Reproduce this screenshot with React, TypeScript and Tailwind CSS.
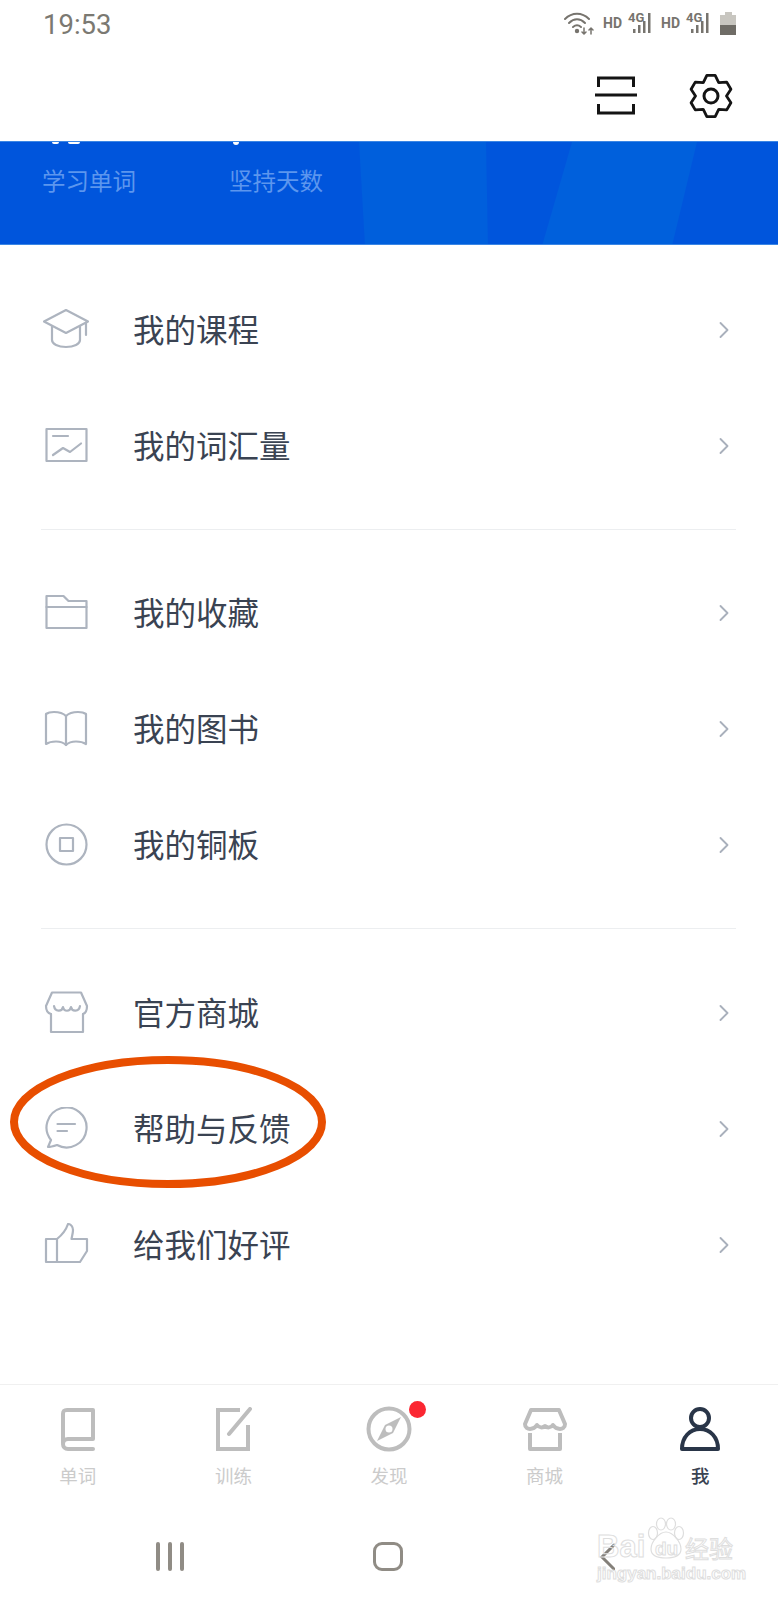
import { ChevronRight } from "lucide-react";
import type { ReactNode } from "react";

const cjk = "font-['Noto_Sans_CJK_SC','Noto_Sans',sans-serif]";

function gearPath(cx: number, cy: number, outer: number, inner: number) {
  const pts: string[] = [];
  for (let i = 0; i < 6; i++) {
    const a = (i * Math.PI) / 3 - Math.PI / 2;
    const at = (r: number, d: number) =>
      `${(cx + r * Math.cos(a + d)).toFixed(2)} ${(cy + r * Math.sin(a + d)).toFixed(2)}`;
    pts.push(at(inner, -0.52), at(outer, -0.2), at(outer, 0.2), at(inner, 0.52));
  }
  return "M" + pts.join("L") + "Z";
}

function MenuIcon({ children }: { children: ReactNode }) {
  return (
    <svg
      width="46"
      height="46"
      viewBox="0 0 46 46"
      fill="none"
      stroke="#adb4bf"
      strokeWidth="2.200"
      strokeLinejoin="round"
      strokeLinecap="round"
      className="shrink-0"
    >
      {children}
    </svg>
  );
}

const icons = {
  cap: (
    <>
      <path d="M23 2 45 13.500 23 25 1 13.500Z" />
      <path d="M9 18v14c0 4 6 7 14 7s14-3 14-7V18" />
      <path d="M43 14.500V27" />
    </>
  ),
  chart: (
    <>
      <rect x="3.500" y="5" width="40" height="32" />
      <path d="M10 12h15" />
      <path d="M10 31l10-7 7 4 11-8.500" />
    </>
  ),
  folder: (
    <>
      <path d="M3.500 37V5h17l5 5h18v27Z" />
      <path d="M3.500 16h40" />
    </>
  ),
  book: (
    <>
      <path d="M23 9C20 6 16 5 11 5 8 5 5 5.500 3 7V37C6 35 10 34.500 13 34.500 17 34.500 20 35 23 38 26 35 29 34.500 33 34.500 36 34.500 40 35 43 37V7C41 5.500 38 5 35 5 30 5 26 6 23 9Z" />
      <path d="M23 9V38" />
    </>
  ),
  coin: (
    <>
      <circle cx="23.500" cy="21.500" r="20" />
      <rect x="17" y="15" width="13" height="13" />
    </>
  ),
  store: (
    <>
      <path d="M8 23C4 22 3 18 3 15L9 1.500H38L44 15C44 18 43 22 40 23" />
      <path d="M8 23V41H40V23" />
      <path d="M11 15c1 6 8 6 9 1 1 5 7 5 8 0 1 5 8 5 9-1" />
    </>
  ),
  chat: (
    <>
      <path d="M5 40l3-7a20 20 0 1 1 6 5c-3 1-6 2-9 2Z" />
      <path d="M14.500 17H32M14.500 24H24" />
    </>
  ),
  thumb: (
    <>
      <path d="M14 16C19 12 23 7 25 1 28 1 30 4 30 7 30 10 29 13 28.500 16H44V28L37 39H3V16H14V39" />
    </>
  ),
};

function Row({ icon, label }: { icon: ReactNode; label: string }) {
  return (
    <div className="flex h-[116px] items-center pl-[43px] pr-[43px]">
      <MenuIcon>{icon}</MenuIcon>
      <span className={`ml-[44px] flex-1 pb-[4px] text-[31.500px] leading-none text-[#3a4352] ${cjk}`}>{label}</span>
      <ChevronRight size={28} strokeWidth={1.600} color="#a9b0bc" className="-mr-[3px] -mt-[2px]" />
    </div>
  );
}

function Signal() {
  return (
    <div className="relative h-[24px] w-[26px]">
      <span className="absolute left-0 top-0 font-['Roboto',sans-serif] text-[13px] font-bold leading-none text-[#77746e]">4G</span>
      <svg width="26" height="24" viewBox="0 0 26 24" className="absolute left-0 top-0" fill="#77746e">
        <rect x="5" y="18" width="2.500" height="4" />
        <rect x="10" y="14" width="2.500" height="8" />
        <rect x="15" y="10" width="2.500" height="12" />
        <rect x="20" y="2" width="2.500" height="20" />
      </svg>
    </div>
  );
}

function StatusBar() {
  return (
    <div className="flex h-[50px] items-center pl-[43px] pr-[42px]">
      <span className="pb-[1px] font-['Roboto',sans-serif] text-[27.500px] leading-none text-[#7b7972]">19:53</span>
      <div className="-mt-[4px] ml-auto flex items-center">
        <svg width="30" height="24" viewBox="0 0 30 24" fill="none" stroke="#77746e" strokeWidth="2" strokeLinecap="round">
          <path d="M1 8c7-7 17-7 24 0" />
          <path d="M5 12c5-5 11-5 16 0" />
          <path d="M9 16c3-2.500 5-2.500 8 0" />
          <circle cx="13" cy="20" r="1.200" fill="#77746e" />
          <path d="M20 17v6M18 21l2 2 2-2M27 23v-6M25 19l2-2 2 2" strokeWidth="1.500" />
        </svg>
        <span className="ml-[9px] font-['Roboto',sans-serif] text-[14px] font-bold leading-none text-[#77746e]">HD</span>
        <div className="ml-[6px]"><Signal /></div>
        <span className="ml-[7px] font-['Roboto',sans-serif] text-[14px] font-bold leading-none text-[#77746e]">HD</span>
        <div className="ml-[6px]"><Signal /></div>
        <div className="ml-[8px] flex w-[16px] flex-col items-center">
          <div className="h-[3px] w-[7px] bg-[#c8c6c0]" />
          <div className="h-[10px] w-full bg-[#c8c6c0]" />
          <div className="h-[10px] w-full bg-[#6f6c66]" />
        </div>
      </div>
    </div>
  );
}

function Header() {
  return (
    <div className="flex h-[91px] items-start justify-end pr-[44px] pt-[23px]">
      <svg width="44" height="44" viewBox="0 0 44 44" fill="none" stroke="#141414" strokeWidth="3">
        <path d="M4.500 14V5h35v9" />
        <path d="M1 22h42" />
        <path d="M4.500 31v9h35v-9" />
      </svg>
      <svg width="46" height="46" viewBox="0 0 46 46" fill="none" stroke="#141414" strokeWidth="2.800" strokeLinejoin="round" className="ml-[50px]">
        <path d={gearPath(23, 23, 21, 15.500)} />
        <circle cx="23" cy="23" r="7" strokeWidth="3" />
      </svg>
    </div>
  );
}

function Banner() {
  return (
    <div className="relative h-[104px] overflow-hidden border-y border-y-[#3b86e4] bg-[#0055dc]">
      <svg className="absolute inset-0" width="778" height="104" viewBox="0 0 778 104">
        <path d="M359 0H486L488 104H365Z" fill="#005fdc" />
        <path d="M572 0H697L672 104H542Z" fill="#0060dc" />
      </svg>
      {/* bottoms of the big numbers, scrolled under the header */}
      <div className="absolute left-[52px] top-0 h-[2px] w-[7px] rounded-b-sm bg-white" />
      <div className="absolute left-[68px] top-0 h-[2px] w-[12px] rounded-b-full bg-white" />
      <div className="absolute left-[233px] top-0 h-[3px] w-[6px] rounded-b-sm bg-white" />
      <div className={`relative flex pl-[42px] pt-[23px] text-[23.500px] leading-[30px] text-[#5c96ee] ${cjk}`}>
        <span className="w-[187px]">学习单词</span>
        <span>坚持天数</span>
      </div>
    </div>
  );
}

function Menu() {
  return (
    <div className="flex-1 pt-[28px]">
      <Row icon={icons.cap} label="我的课程" />
      <Row icon={icons.chart} label="我的词汇量" />
      <div className="mb-[26px] ml-[41px] mr-[42px] mt-[24px] h-px bg-[#eceef0]" />
      <Row icon={icons.folder} label="我的收藏" />
      <Row icon={icons.book} label="我的图书" />
      <Row icon={icons.coin} label="我的铜板" />
      <div className="mb-[27px] ml-[41px] mr-[42px] mt-[24px] h-px bg-[#eceef0]" />
      <Row icon={icons.store} label="官方商城" />
      <Row icon={icons.chat} label="帮助与反馈" />
      <Row icon={icons.thumb} label="给我们好评" />
    </div>
  );
}

const gray = "#bdbdbd";

function Tab({ label, active, dot, children }: { label: string; active?: boolean; dot?: boolean; children: ReactNode }) {
  return (
    <div className="relative flex flex-1 flex-col items-center">
      <div className="relative flex h-[44px] w-[46px] items-center justify-center">
        {children}
        {dot && <span className="absolute -right-[14px] -top-[6px] h-[17px] w-[17px] rounded-full bg-[#fb2732]" />}
      </div>
      <span className={`mt-[12px] text-[18.500px] leading-[24px] ${active ? "font-medium text-[#3a4352]" : "text-[#cbcbcb]"} ${cjk}`}>{label}</span>
    </div>
  );
}

function TabBar() {
  return (
    <div className="flex h-[108px] border-t border-[#f0f0f0] pt-[22px]">
      <Tab label="单词">
        <svg width="36" height="44" viewBox="0 0 36 44" fill="none" stroke={gray} strokeWidth="4" strokeLinecap="round" strokeLinejoin="round">
          <path d="M3 36V7c0-3 1-4 4-4h26v29H8c-3 0-5 2-5 5s2 5 5 5h25" />
        </svg>
      </Tab>
      <Tab label="训练">
        <svg width="38" height="44" viewBox="0 0 38 44" fill="none" stroke={gray} strokeWidth="4">
          <path d="M26 3H4v39h30V18" />
          <path d="M15 27 36 2" strokeLinecap="round" />
        </svg>
      </Tab>
      <Tab label="发现" dot>
        <svg width="46" height="46" viewBox="0 0 46 46" fill="none" stroke={gray} strokeWidth="4">
          <circle cx="23" cy="23" r="20.500" />
          <path d="M35 11 27 27 11 35 19 19Z" fill={gray} stroke="none" />
          <circle cx="23" cy="23" r="3.500" fill="#fff" stroke="none" />
        </svg>
      </Tab>
      <Tab label="商城">
        <svg width="44" height="44" viewBox="0 0 44 44" fill="none" stroke={gray} strokeWidth="4" strokeLinejoin="round">
          <path d="M8 3h28l6 14c0 4-3 5-5 5-3 0-5-1-7-4-2 3-6 3-8 1-2 2-6 2-8-1-2 3-4 4-7 4-2 0-5-1-5-5Z" />
          <path d="M7 26v16h30V26" />
        </svg>
      </Tab>
      <Tab label="我" active>
        <svg width="40" height="44" viewBox="0 0 40 44" fill="none" stroke="#293548" strokeWidth="4">
          <circle cx="20" cy="11" r="9" />
          <path d="M2 42c0-12 8-20 18-20s18 8 18 20Z" strokeLinejoin="round" />
        </svg>
      </Tab>
    </div>
  );
}

function Watermark() {
  const outline = "text-transparent [-webkit-text-stroke:1px_#dedede]";
  return (
    <div className="pointer-events-none absolute left-[597px] top-[1517px] w-[136px] font-['Liberation_Sans',sans-serif]">
      <svg width="38" height="42" viewBox="0 0 38 42" className="absolute left-[50px] top-0" fill="none" stroke="#dedede" strokeWidth="1.200">
        <ellipse cx="6" cy="16" rx="4.500" ry="6.500" />
        <ellipse cx="14" cy="7" rx="4.500" ry="6" />
        <ellipse cx="24" cy="7" rx="4.500" ry="6" />
        <ellipse cx="32" cy="16" rx="4.500" ry="6.500" />
        <path d="M19 15c-7 0-15 10-15 17 0 6 6 9 15 9s15-3 15-9c0-7-8-17-15-17Z" />
      </svg>
      <span className={`absolute left-[58px] top-[22px] text-[19px] font-bold leading-none ${outline}`}>du</span>
      <div className="relative flex h-[45px] items-end">
        <span className={`text-[31px] font-bold leading-[30px] ${outline}`}>Bai</span>
        <span className={`ml-auto text-[24px] leading-[28px] ${outline} ${cjk}`}>经验</span>
      </div>
      <div className={`mt-[2px] text-[17px] font-bold leading-[20px] ${outline}`}>jingyan.baidu.com</div>
    </div>
  );
}

function SystemNav() {
  return (
    <div className="flex h-[108px] items-start pt-[50px]">
      <div className="ml-[156px] flex h-[29px] w-[28px] justify-between">
        <span className="w-[4px] rounded-full bg-[#908c85]" />
        <span className="w-[4px] rounded-full bg-[#908c85]" />
        <span className="w-[4px] rounded-full bg-[#908c85]" />
      </div>
      <div className="ml-[189px] h-[29px] w-[30px] rounded-[9px] border-[3.500px] border-[#908c85]" />
      <svg width="16" height="30" viewBox="0 0 16 30" fill="none" stroke="#84807a" strokeWidth="3" strokeLinecap="round" className="ml-[196px]">
        <path d="M15 3 3 15l12 12" />
      </svg>
    </div>
  );
}

export default function App() {
  return (
    <div className="relative flex h-[1600px] w-[778px] flex-col overflow-hidden bg-white">
      <StatusBar />
      <Header />
      <Banner />
      <Menu />
      <TabBar />
      <SystemNav />
      <Watermark />
      {/* orange marker drawn on the screenshot */}
      <svg className="absolute left-[8px] top-[1054px]" width="320" height="136" viewBox="0 0 320 136" fill="none">
        <ellipse cx="160" cy="68" rx="154" ry="62" stroke="#e84e00" strokeWidth="8" />
      </svg>
    </div>
  );
}
